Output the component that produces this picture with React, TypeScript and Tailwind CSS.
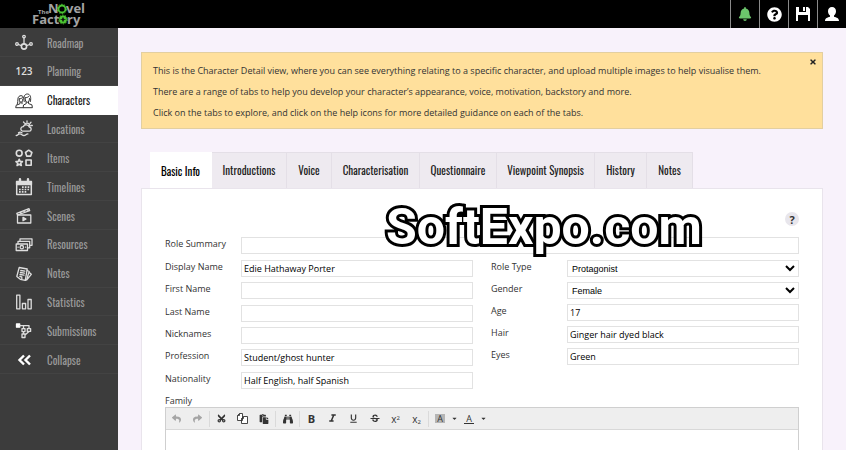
import type { ReactNode } from "react";
import {
  FaBell,
  FaBinoculars,
  FaCaretDown,
  FaCut,
  FaPaste,
  FaQuestionCircle,
  FaReply,
  FaShare,
  FaTimes,
} from "react-icons/fa";
import { MdFormatItalic, MdFormatUnderlined, MdStrikethroughS } from "react-icons/md";

const narrow = "font-['Oswald','Roboto_Condensed','Liberation_Sans_Narrow',sans-serif]";

function Icon({ children }: { children: ReactNode }) {
  return (
    <svg
      viewBox="0 0 18 18"
      className="size-[18px] shrink-0"
      fill="none"
      stroke="currentColor"
      strokeWidth="1.3"
      strokeLinejoin="round"
      strokeLinecap="round"
      aria-hidden="true"
    >
      {children}
    </svg>
  );
}

const navItems: { label: string; icon: ReactNode; active?: boolean }[] = [
  {
    label: "Roadmap",
    icon: (
      <Icon>
        <circle cx="9" cy="12.5" r="2.6" strokeWidth="1.6" />
        <circle cx="9" cy="2.6" r="1.3" />
        <circle cx="2" cy="10" r="1.3" />
        <circle cx="16" cy="10" r="1.3" />
        <path d="M9 4v6M3.3 10.5l3.2 1.2M14.7 10.5l-3.2 1.2" />
      </Icon>
    ),
  },
  {
    label: "Planning",
    icon: <span className="w-[18px] text-center font-['Open_Sans',sans-serif] text-[10px] font-semibold">123</span>,
  },
  {
    label: "Characters",
    active: true,
    icon: (
      <Icon>
        <path d="M2.200 12.300c.9-1.600.4-4 .8-6C3.400 4.600 4.500 3.700 6 3.700s2.500.9 2.800 2.600M4.300 6.800c1.600 0 2.600-.5 3.200-1.300M4.200 7c0 2 .7 3.300 1.800 3.300S7.800 9 7.800 7M5 10v1.700L1.200 13.300.7 15.700h7.500M7 10v1.700" strokeWidth="1" />
        <path d="M9.200 9.500c-1-4.500.3-7.500 3.100-7.500s4.100 3 3.100 7.500M10.300 5.700c1.500 0 2.800-.4 3.500-1.300M10.200 6.500c0 2.400.9 3.800 2.100 3.800s2.200-1.400 2.200-3.800M11.200 10v1.700L8.500 13l-.3 2.700h9.200l-.5-2.900-3.400-1.200V10" strokeWidth="1" />
      </Icon>
    ),
  },
  {
    label: "Locations",
    icon: (
      <Icon>
        <path d="M8 11.200h6a2 2 0 0 0 .3-4 3.200 3.200 0 0 0-6-.6A2.300 2.300 0 0 0 8 11.200Z" />
        <path d="M10 4a2.800 2.800 0 0 1 4.800 2.300M12 .8v1.200M8.500 2l.8.9M16 2.300l-.9.9M17.300 5.500H16" />
        <path d="M1.200 15.500c1.700 0 1.700-1.600 3.700-1.600s2 1.600 4 1.600 2-1.600 4-1.600M3.500 12.800c1-.8 2.500-.6 3.500 0" />
      </Icon>
    ),
  },
  {
    label: "Items",
    icon: (
      <Icon>
        <g strokeWidth="1.600">
          <circle cx="4.200" cy="4.200" r="2.900" />
          <path d="m13.700 1.200 3.200 2.300-1.200 3.600h-4L10.500 3.500Z" />
          <path d="m4.200 10.300.9 2.100 2.300.2-1.700 1.500.6 2.400-2.100-1.300-2.100 1.300.6-2.400L1 12.600l2.300-.2Z" />
          <path d="M11 11h5.200v5.200H11Z" />
        </g>
      </Icon>
    ),
  },
  {
    label: "Timelines",
    icon: (
      <Icon>
        <path d="M1.700 4h14.600v12.500H1.700Z" strokeWidth="1.500" />
        <path d="M1.500 3.500h15v3h-15Z" fill="currentColor" />
        <path d="M5 1.300v2M13 1.300v2" strokeWidth="2.400" />
        <path d="M7 9.200h8M4 11.500h11M4 13.800h8" strokeWidth="1.700" strokeDasharray="1.700 1.100" strokeLinecap="butt" />
      </Icon>
    ),
  },
  {
    label: "Scenes",
    icon: (
      <Icon>
        <path d="M2.500 8h13.300v8H2.500Z" />
        <path d="M1.800 6.300 14 1.700l.7 2L2.500 8ZM5 5.200l1.600 1.200M8.500 3.900l1.600 1.200M12 2.600l1.300 1.300" />
        <path d="m8 10.300 3 1.700-3 1.700Z" fill="currentColor" />
      </Icon>
    ),
  },
  {
    label: "Resources",
    icon: (
      <Icon>
        <path d="M1.200 8h11.300v6.500H1.200Z" />
        <path d="M3 7.700V5.300h11.700v6.500h-2M5 5V2.800h12v6.500h-2" />
        <circle cx="6.800" cy="11.200" r="1.700" />
        <path d="M3 11.200h.2M10.500 11.200h.2" />
      </Icon>
    ),
  },
  {
    label: "Notes",
    icon: (
      <Icon>
        <path d="m4.200 2.500 8 1.500-1.900 11.300-5-1-3.500-2.800Z" />
        <path d="m12.200 5.500 2 1-2.600 8.300-1.300.5M14.300 7.500l2 1.800-4.500 5.500M5.800 5.500l4 .7M5.400 7.500l4 .7M5 9.500l4 .7M4.800 11.500l2 .4v2" />
      </Icon>
    ),
  },
  {
    label: "Statistics",
    icon: (
      <Icon>
        <path d="M1.700 2.200h3.200v13.600H1.700ZM7.400 10.500h3.200v5.300H7.400ZM13 6.500h3.200v9.300H13Z" />
      </Icon>
    ),
  },
  {
    label: "Submissions",
    icon: (
      <Icon>
        <path d="M1.500 2h3.200v3.200H1.500Z" fill="white" stroke="white" />
        <path d="M5 3.600h9M8.500 3.600v3M14 3.600v3M7 6.600h3v3H7ZM12.300 6.600h3.300v2.800h-3.300ZM8.500 9.600V12M14 9.400 10 13M7 12h3v3.500H7Z" />
      </Icon>
    ),
  },
  {
    label: "Collapse",
    icon: (
      <Icon>
        <path d="M9 4.500 4.500 9 9 13.500M15 4.500 10.500 9l4.500 4.500" strokeWidth="2.400" stroke="white" strokeLinecap="butt" strokeLinejoin="miter" />
      </Icon>
    ),
  },
];

function Logo() {
  return (
    <svg viewBox="0 0 60 28" className="ml-[30px] h-7 w-[60px]" role="img" aria-label="The Novel Factory">
      <g fill="#a3a3a3" fontFamily="'Open Sans', sans-serif" fontWeight="700">
        <text x="8" y="14" fontSize="6">The</text>
        <text x="18" y="13" fontSize="13">N</text>
        <text x="36" y="13" fontSize="13">vel</text>
        <text x="2" y="24" fontSize="13">Fact</text>
        <text x="37" y="24" fontSize="13">ry</text>
      </g>
      <g fill="none" stroke="#4bc532">
        <circle cx="32" cy="9" r="3.500" strokeWidth="1.800" />
        <circle cx="32" cy="9" r="4.700" strokeWidth="1" strokeDasharray="1.500 1.450" />
        <circle cx="33" cy="19.500" r="2.600" strokeWidth="2.600" />
        <circle cx="33" cy="19.500" r="4.400" strokeWidth="1" strokeDasharray="1.400 1.360" />
      </g>
      <path d="M33 17v5M30.500 19.500h5" stroke="#111" strokeWidth=".7" />
    </svg>
  );
}

function HeaderButton({ label, children }: { label: string; children: ReactNode }) {
  return (
    <button
      type="button"
      aria-label={label}
      className="flex h-full w-[29px] items-center justify-center border-l border-[#8a8a8a] text-white"
    >
      {children}
    </button>
  );
}

const tabs = [
  { label: "Basic Info", width: "w-[62px]" },
  { label: "Introductions", width: "w-[75px]" },
  { label: "Voice", width: "w-[45px]" },
  { label: "Characterisation", width: "w-[88px]" },
  { label: "Questionnaire", width: "w-[77px]" },
  { label: "Viewpoint Synopsis", width: "w-[98px]" },
  { label: "History", width: "w-[52px]" },
  { label: "Notes", width: "w-[46px]" },
];

const leftFields = [
  ["Display Name", "Edie Hathaway Porter"],
  ["First Name", ""],
  ["Last Name", ""],
  ["Nicknames", ""],
  ["Profession", "Student/ghost hunter"],
  ["Nationality", "Half English, half Spanish"],
];

const rightFields = [
  ["Age", "17"],
  ["Hair", "Ginger hair dyed black"],
  ["Eyes", "Green"],
];

const fieldBox = "h-[17px] min-w-0 flex-1 rounded-none border border-[#e2e2e2] bg-white text-black outline-none";

function Field({ label, value, select }: { label: string; value: string; select?: boolean }) {
  const id = label.toLowerCase().replace(" ", "-");
  return (
    <div className="flex items-start">
      <label htmlFor={id} className="w-[76px] shrink-0 text-[9px] leading-[14px] text-[#333]">
        {label}
      </label>
      {select ? (
        <select id={id} defaultValue={value} className={`${fieldBox} font-['Liberation_Sans',Arial,sans-serif] text-[9px]`}>
          <option>{value}</option>
        </select>
      ) : (
        <input id={id} defaultValue={value} className={`${fieldBox} px-[2px] text-[9px]`} />
      )}
    </div>
  );
}

function Tool({ label, muted, children }: { label: string; muted?: boolean; children: ReactNode }) {
  return (
    <button
      type="button"
      aria-label={label}
      className={`flex h-full w-[21px] items-center justify-center text-[10px] leading-none ${muted ? "text-[#a5a5a5]" : "text-[#333]"}`}
    >
      {children}
    </button>
  );
}

function Separator() {
  return <span className="mx-px h-4 w-px bg-[#dadada]" />;
}

export default function App() {
  return (
    <div className="relative flex h-screen flex-col overflow-hidden bg-[#f8f2fb] font-['Open_Sans',sans-serif]">
      <header className="flex h-7 shrink-0 items-center justify-between bg-black">
        <Logo />
        <div className="flex h-full">
          <HeaderButton label="Notifications">
            <FaBell className="size-[14px] text-[#6cc56c]" />
          </HeaderButton>
          <HeaderButton label="Help">
            <FaQuestionCircle className="size-[15px]" />
          </HeaderButton>
          <HeaderButton label="Save">
            <svg viewBox="0 0 14 14" className="size-[14px]" fill="currentColor" aria-hidden="true">
              <path fillRule="evenodd" d="M0 0h3v5h7V0h2l2 2v12h-2V8H2v6H0ZM7 0h2v4H7Z" />
            </svg>
          </HeaderButton>
          <HeaderButton label="Account">
            <svg viewBox="0 0 16 16" className="size-4" fill="currentColor" aria-hidden="true">
              <path d="M8 1c2.500 0 4 1.700 4 4.200 0 1.800-.8 3.400-2 4.300v1.300c2.500.7 5 1.500 5 4.200H1c0-2.700 2.500-3.500 5-4.200V9.500C4.800 8.600 4 7 4 5.200 4 2.700 5.500 1 8 1Z" />
            </svg>
          </HeaderButton>
        </div>
      </header>

      <div className="flex min-h-0 flex-1">
        <aside className="w-[118px] shrink-0 bg-[#3c3c3c]">
          <nav className={`grid h-[346px] grid-rows-12 ${narrow}`}>
            {navItems.map((item) => (
              <a
                key={item.label}
                href="#"
                className={`flex items-center gap-[14px] border-b pt-[2px] pl-[15px] text-[11px] ${
                  item.active ? "border-white bg-white text-[#333]" : "border-[#434343] text-[#dedede]"
                }`}
              >
                {item.icon}
                <span className={item.active ? "text-[#222]" : "text-[#999]"}>{item.label}</span>
              </a>
            ))}
          </nav>
        </aside>

        <main className="flex min-w-0 flex-1 flex-col px-[23px] pt-6">
          <section className="relative shrink-0 border border-[#e3cfa0] bg-[#ffe09c] px-[11px] pt-[7px] pb-[5px] text-[9px] leading-[21px] text-[#333]">
            <p>
              This is the Character Detail view, where you can see everything relating to a specific character, and
              upload multiple images to help visualise them.
            </p>
            <p>There are a range of tabs to help you develop your character’s appearance, voice, motivation, backstory and more.</p>
            <p>Click on the tabs to explore, and click on the help icons for more detailed guidance on each of the tabs.</p>
            <button type="button" aria-label="Close" className="absolute top-[5px] right-[5px] text-[#222]">
              <FaTimes className="size-2" />
            </button>
          </section>

          <div role="tablist" className={`mt-[23px] flex h-9 shrink-0 pl-[9px] text-[11px] ${narrow}`}>
            {tabs.map((tab, i) => (
              <button
                key={tab.label}
                type="button"
                role="tab"
                aria-selected={i === 0}
                className={`shrink-0 whitespace-nowrap border-t border-r ${tab.width} ${
                  i === 0 ? "-mb-px border-white bg-white text-black" : "border-[#e4dfe7] bg-[#eeeaf0] text-[#222]"
                }`}
              >
                {tab.label}
              </button>
            ))}
          </div>

          <section className="flex min-h-0 flex-1 flex-col border border-b-0 border-[#e9e4ec] bg-white px-[23px] pt-[23px]">
            <div className="flex justify-end">
              <button
                type="button"
                aria-label="Help on basic info"
                className="flex size-[14px] items-center justify-center rounded-full bg-[#e8e6ec] text-[11px] leading-none font-bold text-[#333]"
              >
                ?
              </button>
            </div>

            <div className="mt-[11px]">
              <Field label="Role Summary" value="" />
            </div>
            <div className="mt-[6px] grid grid-cols-2 gap-x-[18px]">
              <div className="grid h-[134px] grid-rows-6">
                {leftFields.map(([label, value]) => (
                  <Field key={label} label={label} value={value} />
                ))}
              </div>
              <div className="grid h-[110px] grid-rows-5">
                <Field label="Role Type" value="Protagonist" select />
                <Field label="Gender" value="Female" select />
                {rightFields.map(([label, value]) => (
                  <Field key={label} label={label} value={value} />
                ))}
              </div>
            </div>

            <label htmlFor="family" className="text-[9px] leading-[13px] text-[#333]">
              Family
            </label>
            <div className="flex min-h-0 flex-1 flex-col border border-b-0 border-[#cfcfcf]">
              <div role="toolbar" className="flex h-[22px] shrink-0 items-center border-b border-[#d8d8d8] bg-[#eeeeee]">
                <Tool label="Undo" muted><FaReply className="size-[9px]" /></Tool>
                <Tool label="Redo" muted><FaShare className="size-[9px]" /></Tool>
                <Separator />
                <Tool label="Cut"><FaCut className="size-[9px] -rotate-90" /></Tool>
                <Tool label="Copy">
                  <svg viewBox="0 0 11 11" className="size-[11px]" fill="white" stroke="currentColor" aria-hidden="true">
                    <path d="M.5 2.500 2.500.5h3v7h-5ZM.5 2.500h2v-2M4.500 5.500l2-2h4v7h-6ZM4.500 5.500h2v-2" strokeWidth=".9" />
                  </svg>
                </Tool>
                <Tool label="Paste"><FaPaste className="size-[10px]" /></Tool>
                <Separator />
                <Tool label="Find"><FaBinoculars className="size-[10px]" /></Tool>
                <Separator />
                <Tool label="Bold"><b className="text-[11px]">B</b></Tool>
                <Tool label="Italic"><MdFormatItalic className="size-[13px]" /></Tool>
                <Tool label="Underline"><MdFormatUnderlined className="size-[11px]" /></Tool>
                <Tool label="Strikethrough"><MdStrikethroughS className="size-[12px]" /></Tool>
                <Tool label="Superscript"><span>x<sup className="text-[6px]">2</sup></span></Tool>
                <Tool label="Subscript"><span>x<sub className="text-[6px]">2</sub></span></Tool>
                <Separator />
                <button type="button" aria-label="Highlight colour" className="flex w-[28px] items-center justify-end gap-[6px] text-[9px] leading-none text-[#333]">
                  <span className="bg-[#b5b5b5] px-[2px]">A</span>
                  <FaCaretDown className="size-[7px]" />
                </button>
                <button type="button" aria-label="Text colour" className="flex w-[29px] items-center justify-end gap-[6px] text-[9px] leading-none text-[#333]">
                  <span className="border-b border-[#333] px-[2px]">A</span>
                  <FaCaretDown className="size-[7px]" />
                </button>
              </div>
              <textarea id="family" className="min-h-0 w-full flex-1 resize-none bg-white p-1 text-[9px] outline-none" />
            </div>
          </section>
        </main>
      </div>

      <div className="pointer-events-none absolute top-[197px] left-[386px] font-['Roboto',sans-serif] text-[50px] leading-[60px] font-bold text-white [-webkit-text-stroke:6px_black] [paint-order:stroke_fill]">
        SoftExpo.com
      </div>
    </div>
  );
}
